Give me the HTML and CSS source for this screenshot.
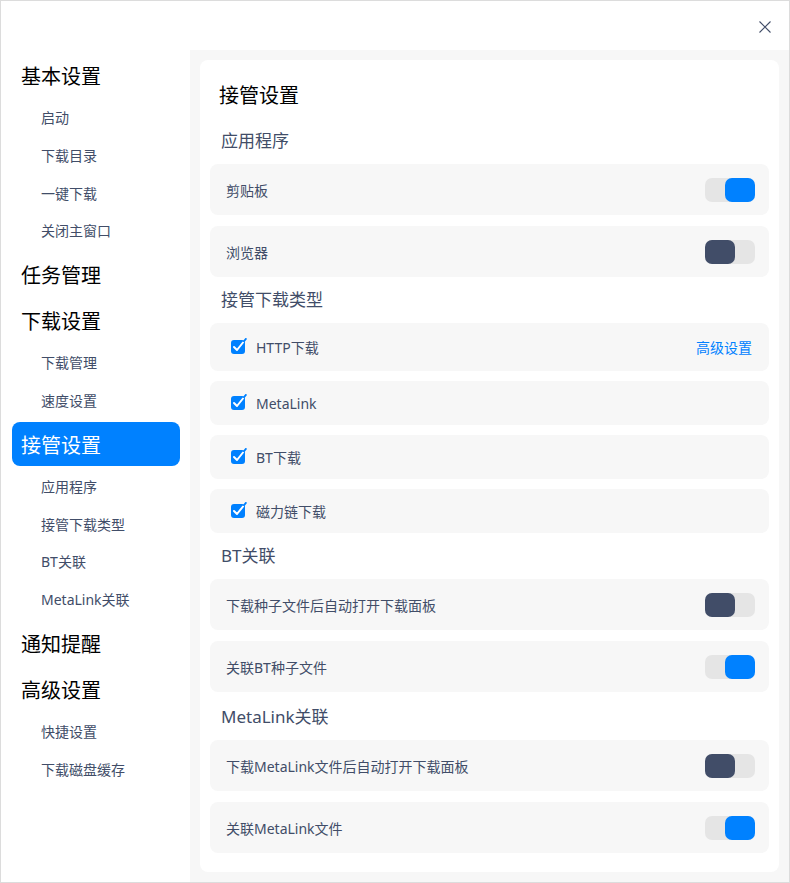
FILE: index.html
```html
<!DOCTYPE html>
<html>
<head>
  <title>设置</title>
  <link rel="stylesheet" href="styles.css">
</head>
<body>
  <div class="window">
    <div class="titlebar">
      <button class="close-btn" title="关闭">
        <svg width="12" height="12" viewBox="0 0 12 12"><path d="M0.5 0.5 L11.5 11.5 M11.5 0.5 L0.5 11.5" stroke="#414d68" stroke-width="1.1" fill="none"/></svg>
      </button>
    </div>

    <div class="main">
      <!-- left navigation -->
      <div class="sidebar">
        <div class="nav-title">基本设置</div>
        <div class="nav-item">启动</div>
        <div class="nav-item">下载目录</div>
        <div class="nav-item">一键下载</div>
        <div class="nav-item">关闭主窗口</div>
        <div class="nav-title">任务管理</div>
        <div class="nav-title">下载设置</div>
        <div class="nav-item">下载管理</div>
        <div class="nav-item">速度设置</div>
        <div class="nav-title active">接管设置</div>
        <div class="nav-item">应用程序</div>
        <div class="nav-item">接管下载类型</div>
        <div class="nav-item">BT关联</div>
        <div class="nav-item">MetaLink关联</div>
        <div class="nav-title">通知提醒</div>
        <div class="nav-title">高级设置</div>
        <div class="nav-item">快捷设置</div>
        <div class="nav-item">下载磁盘缓存</div>
      </div>

      <!-- settings content -->
      <div class="content">
        <div class="panel">
          <div class="panel-title">接管设置</div>

          <div class="section-title">应用程序</div>
          <div class="row switch-row">
            <span>剪贴板</span>
            <span class="switch on"><span class="knob"></span></span>
          </div>
          <div class="row switch-row">
            <span>浏览器</span>
            <span class="switch"><span class="knob"></span></span>
          </div>

          <div class="section-title">接管下载类型</div>
          <div class="row check-row first">
            <label class="check"><span class="box"><svg width="16" height="16" viewBox="0 0 16 16"><rect x="0" y="2" width="14" height="14" rx="3" fill="#0081ff"/><path d="M3 9 L6 12 L12 4.5" stroke="#fff" stroke-width="2" fill="none" stroke-linecap="round" stroke-linejoin="round"/><path d="M13.2 3 L14.8 1" stroke="#0081ff" stroke-width="2" stroke-linecap="round"/></svg></span>HTTP下载</label>
            <a href="#" class="link">高级设置</a>
          </div>
          <div class="row check-row">
            <label class="check"><span class="box"><svg width="16" height="16" viewBox="0 0 16 16"><rect x="0" y="2" width="14" height="14" rx="3" fill="#0081ff"/><path d="M3 9 L6 12 L12 4.5" stroke="#fff" stroke-width="2" fill="none" stroke-linecap="round" stroke-linejoin="round"/><path d="M13.2 3 L14.8 1" stroke="#0081ff" stroke-width="2" stroke-linecap="round"/></svg></span>MetaLink</label>
          </div>
          <div class="row check-row">
            <label class="check"><span class="box"><svg width="16" height="16" viewBox="0 0 16 16"><rect x="0" y="2" width="14" height="14" rx="3" fill="#0081ff"/><path d="M3 9 L6 12 L12 4.5" stroke="#fff" stroke-width="2" fill="none" stroke-linecap="round" stroke-linejoin="round"/><path d="M13.2 3 L14.8 1" stroke="#0081ff" stroke-width="2" stroke-linecap="round"/></svg></span>BT下载</label>
          </div>
          <div class="row check-row">
            <label class="check"><span class="box"><svg width="16" height="16" viewBox="0 0 16 16"><rect x="0" y="2" width="14" height="14" rx="3" fill="#0081ff"/><path d="M3 9 L6 12 L12 4.5" stroke="#fff" stroke-width="2" fill="none" stroke-linecap="round" stroke-linejoin="round"/><path d="M13.2 3 L14.8 1" stroke="#0081ff" stroke-width="2" stroke-linecap="round"/></svg></span>磁力链下载</label>
          </div>

          <div class="section-title">BT关联</div>
          <div class="row switch-row">
            <span>下载种子文件后自动打开下载面板</span>
            <span class="switch"><span class="knob"></span></span>
          </div>
          <div class="row switch-row">
            <span>关联BT种子文件</span>
            <span class="switch on"><span class="knob"></span></span>
          </div>

          <div class="section-title last">MetaLink关联</div>
          <div class="row switch-row">
            <span>下载MetaLink文件后自动打开下载面板</span>
            <span class="switch"><span class="knob"></span></span>
          </div>
          <div class="row switch-row">
            <span>关联MetaLink文件</span>
            <span class="switch on"><span class="knob"></span></span>
          </div>
        </div>
      </div>
    </div>
  </div>
</body>
</html>
```

FILE: styles.css
```css
body {
  margin: 0;
  padding: 0;
  font-family: "Noto Sans", "Noto Sans CJK SC", sans-serif;
  background-color: #fff;
}

.window {
  width: 790px;
  height: 883px;
  box-sizing: border-box;
  border: 1px solid #dcdcdc;
  display: flex;
  flex-direction: column;
  background-color: #fff;
}

.titlebar {
  height: 49px;
  display: flex;
  justify-content: flex-end;
  align-items: center;
}

.close-btn {
  border: none;
  background: transparent;
  padding: 0;
  width: 12px;
  height: 12px;
  margin-right: 18px;
  margin-top: 2px;
  cursor: pointer;
  display: flex;
}

.main {
  flex: 1;
  display: flex;
  min-height: 0;
}

/* sidebar */
.sidebar {
  width: 189px;
  padding-top: 1px;
  flex-shrink: 0;
}

.nav-title {
  height: 44px;
  line-height: 47px;
  margin: 2px 10px 2px 11px;
  padding-left: 9px;
  border-radius: 8px;
  font-size: 20px;
  color: #000;
}

.nav-title.active {
  background-color: #0081ff;
  color: #fff;
}

.nav-item {
  height: 37.8px;
  line-height: 37.8px;
  padding-left: 40px;
  font-size: 14px;
  color: #414d68;
}

/* content */
.content {
  flex: 1;
  background-color: #f7f7f7;
  padding: 10px;
  display: flex;
}

.panel {
  flex: 1;
  background-color: #fff;
  border-radius: 8px;
  padding: 10px 10px;
}

.panel-title {
  height: 48px;
  line-height: 52px;
  padding-left: 9px;
  font-size: 20px;
  color: #000;
}

.section-title {
  height: 46px;
  line-height: 46px;
  padding-left: 11px;
  font-size: 17px;
  color: #414d68;
}

.section-title.last {
  height: 48px;
  line-height: 49px;
}

.row {
  background-color: #f7f7f7;
  border-radius: 8px;
  display: flex;
  align-items: center;
  justify-content: space-between;
  font-size: 14px;
  color: #414d68;
}

.switch-row {
  height: 51px;
  padding: 0 14px 0 16px;
}

.switch-row + .switch-row {
  margin-top: 11px;
}

.check-row {
  height: 44px;
  padding: 0 17px 0 21px;
  margin-top: 10px;
}

.check-row.first {
  height: 48px;
  margin-top: 0;
}

.check {
  display: flex;
  align-items: center;
}

.box {
  width: 16px;
  height: 16px;
  margin-right: 9px;
  margin-top: -2px;
  display: flex;
}

.link {
  color: #0081ff;
  text-decoration: none;
}

.switch {
  width: 50px;
  height: 24px;
  border-radius: 7px;
  background-color: #e5e5e5;
  display: flex;
  justify-content: flex-start;
}

.switch .knob {
  width: 30px;
  height: 24px;
  border-radius: 7px;
  background-color: #414d68;
}

.switch.on {
  justify-content: flex-end;
}

.switch.on .knob {
  background-color: #0081ff;
}
```
